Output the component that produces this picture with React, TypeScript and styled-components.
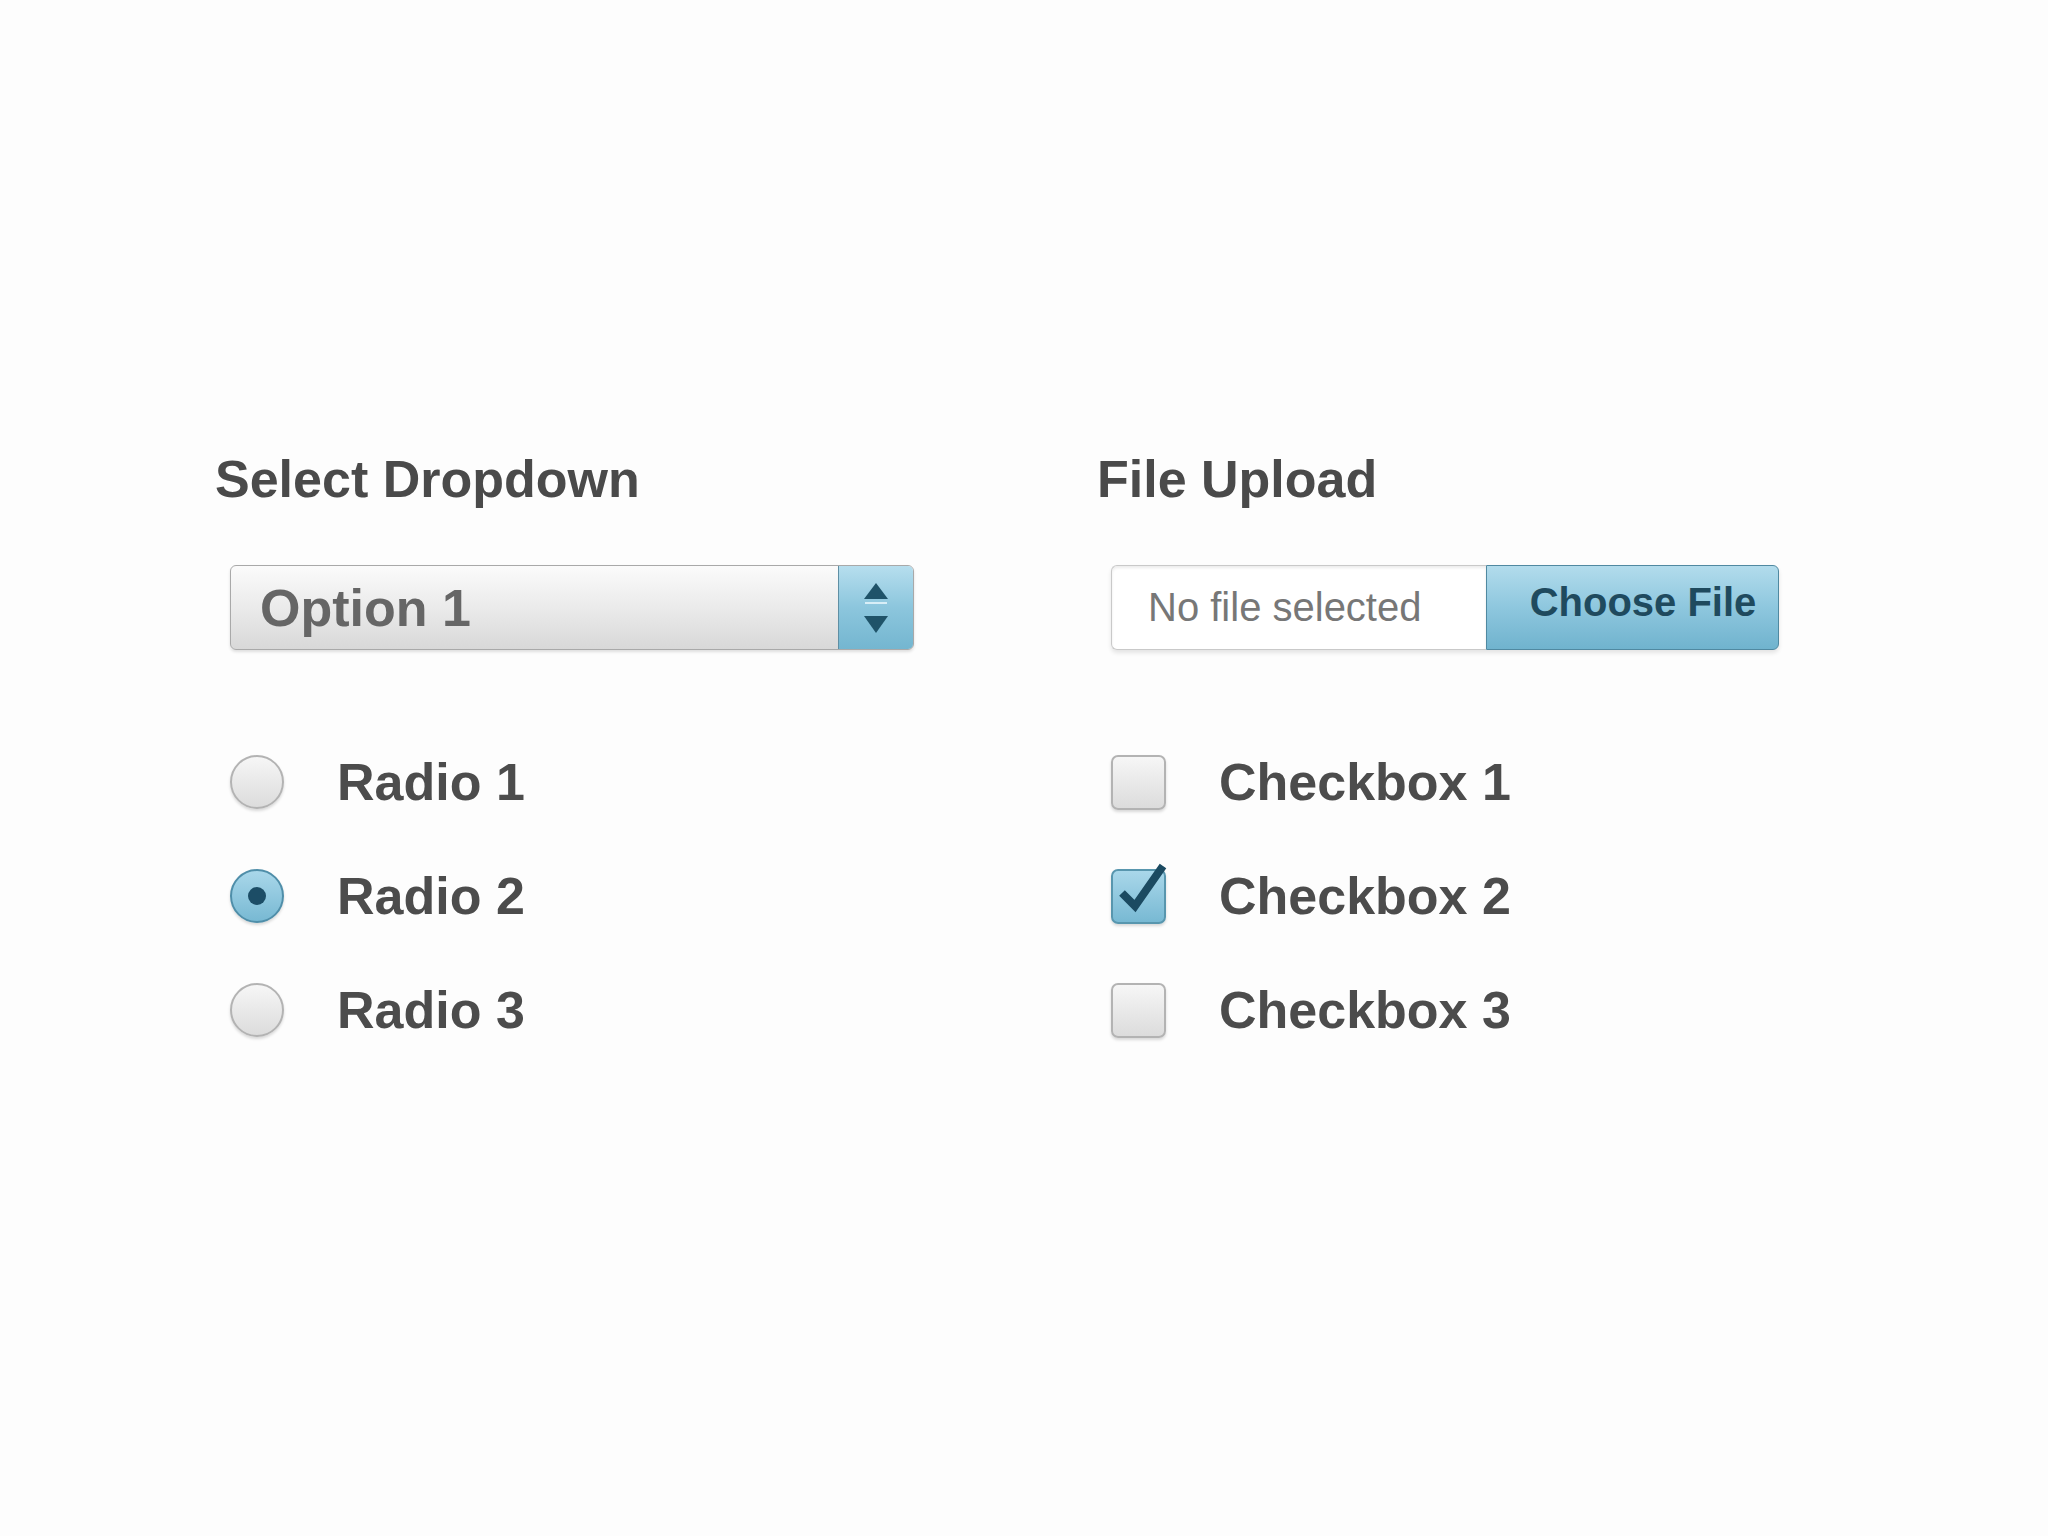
import styled, { createGlobalStyle } from "styled-components";

const GlobalStyle = createGlobalStyle`
  html, body {
    margin: 0;
    background: #fdfdfd;
  }
  body {
    font-family: "Liberation Sans", Arial, Helvetica, sans-serif;
  }
`;

const Page = styled.div`
  min-height: 1536px;
  box-sizing: border-box;
  padding: 449px 0 0 215px;
  display: grid;
  grid-template-columns: 882px 882px;
  align-items: start;
`;

const Column = styled.section`
  display: flex;
  flex-direction: column;
`;

const Heading = styled.h2`
  margin: 0;
  font-size: 52px;
  line-height: 60px;
  font-weight: bold;
  color: #4a4a4a;
`;

const Controls = styled.div<{ $indent: number }>`
  display: flex;
  flex-direction: column;
  margin-top: 56px;
  padding-left: ${(p) => p.$indent}px;
`;

/* select */
const Select = styled.div`
  display: flex;
  width: 684px;
  height: 85px;
  box-sizing: border-box;
  border: 1px solid #a9a9a9;
  border-radius: 6px;
  overflow: hidden;
  box-shadow: 0 2px 3px rgba(0, 0, 0, 0.12);
  background: linear-gradient(#fbfbfb, #e9e9e9 55%, #d8d8d8);
`;

const SelectValue = styled.div`
  flex: 1;
  display: flex;
  align-items: center;
  padding-left: 29px;
  font-size: 52px;
  font-weight: bold;
  color: #666;
`;

const Spinner = styled.div`
  width: 74px;
  display: flex;
  align-items: center;
  justify-content: center;
  border-left: 1px solid #5f8fa4;
  background: linear-gradient(#b6deee, #8cc6dd 50%, #74b6d0);
`;

/* file upload */
const FileField = styled.div`
  display: flex;
  width: 668px;
  height: 85px;
  box-shadow: 0 3px 4px rgba(0, 0, 0, 0.1);
  border-radius: 6px;
`;

const FileName = styled.div`
  flex: 1;
  display: flex;
  align-items: center;
  padding-left: 36px;
  border: 1px solid #c9c9c9;
  border-right: none;
  border-radius: 6px 0 0 6px;
  background: #fff;
  box-shadow: inset 0 2px 3px rgba(0, 0, 0, 0.08);
  font-size: 40px;
  color: #777;
`;

const ChooseButton = styled.div`
  width: 293px;
  box-sizing: border-box;
  display: flex;
  align-items: center;
  justify-content: center;
  padding: 0 0 10px 21px;
  border: 1px solid #5089a1;
  border-radius: 0 6px 6px 0;
  background: linear-gradient(#b2dcec, #8ec7de 50%, #70b3ce);
  font-size: 40px;
  font-weight: bold;
  color: #1f4a5e;
`;

/* option lists */
const OptionList = styled.div`
  display: flex;
  flex-direction: column;
  gap: 58px;
  margin-top: 104px;
`;

const OptionRow = styled.label`
  display: flex;
  align-items: center;
  height: 56px;
  gap: 53px;
  font-size: 52px;
  font-weight: bold;
  color: #4c4c4c;
`;

const Radio = styled.span<{ $checked?: boolean }>`
  width: 54px;
  height: 54px;
  box-sizing: border-box;
  border-radius: 50%;
  display: flex;
  align-items: center;
  justify-content: center;
  border: 2px solid ${(p) => (p.$checked ? "#4f8ea9" : "#b3b3b3")};
  background: ${(p) =>
    p.$checked
      ? "linear-gradient(#a9d7ea, #78b9d3)"
      : "linear-gradient(#f6f6f6, #dcdcdc)"};
  box-shadow: 0 2px 3px rgba(0, 0, 0, 0.15);
`;

const RadioDot = styled.span`
  width: 18px;
  height: 18px;
  border-radius: 50%;
  background: #1c4d66;
`;

const Checkbox = styled.span<{ $checked?: boolean }>`
  position: relative;
  width: 55px;
  height: 55px;
  box-sizing: border-box;
  border-radius: 7px;
  border: 2px solid ${(p) => (p.$checked ? "#5896ae" : "#b3b3b3")};
  background: ${(p) =>
    p.$checked
      ? "linear-gradient(#a9d7ea, #78b9d3)"
      : "linear-gradient(#f6f6f6, #dcdcdc)"};
  box-shadow: 0 2px 3px rgba(0, 0, 0, 0.15);
`;

const Check = styled.svg`
  position: absolute;
  left: -2px;
  top: -2px;
  overflow: visible;
`;

const radios = [
  { label: "Radio 1", checked: false },
  { label: "Radio 2", checked: true },
  { label: "Radio 3", checked: false },
];

const boxes = [
  { label: "Checkbox 1", checked: false },
  { label: "Checkbox 2", checked: true },
  { label: "Checkbox 3", checked: false },
];

const App = () => {
  return (
    <>
      <GlobalStyle />
      <Page>
        <Column>
          <Heading>Select Dropdown</Heading>
          <Controls $indent={15}>
            <Select>
              <SelectValue>Option 1</SelectValue>
              <Spinner>
                <svg width="24" height="50" viewBox="0 0 24 50">
                  <path d="M0 16 L12 0 L24 16 Z" fill="#1f5369" />
                  <rect x="1" y="19" width="22" height="2" fill="#d8eef7" />
                  <path d="M0 33 L24 33 L12 50 Z" fill="#1f5369" />
                </svg>
              </Spinner>
            </Select>
            <OptionList>
              {radios.map((r) => (
                <OptionRow key={r.label}>
                  <Radio $checked={r.checked}>{r.checked && <RadioDot />}</Radio>
                  {r.label}
                </OptionRow>
              ))}
            </OptionList>
          </Controls>
        </Column>
        <Column>
          <Heading>File Upload</Heading>
          <Controls $indent={14}>
            <FileField>
              <FileName>No file selected</FileName>
              <ChooseButton>Choose File</ChooseButton>
            </FileField>
            <OptionList>
              {boxes.map((b) => (
                <OptionRow key={b.label}>
                  <Checkbox $checked={b.checked}>
                    {b.checked && (
                      <Check width="55" height="55" viewBox="0 0 55 55">
                        <path
                          d="M11 24 L24 37 L52 -3"
                          fill="none"
                          stroke="#1b4a61"
                          strokeWidth="8"
                          strokeLinejoin="miter"
                        />
                      </Check>
                    )}
                  </Checkbox>
                  {b.label}
                </OptionRow>
              ))}
            </OptionList>
          </Controls>
        </Column>
      </Page>
    </>
  );
};

export default App;
